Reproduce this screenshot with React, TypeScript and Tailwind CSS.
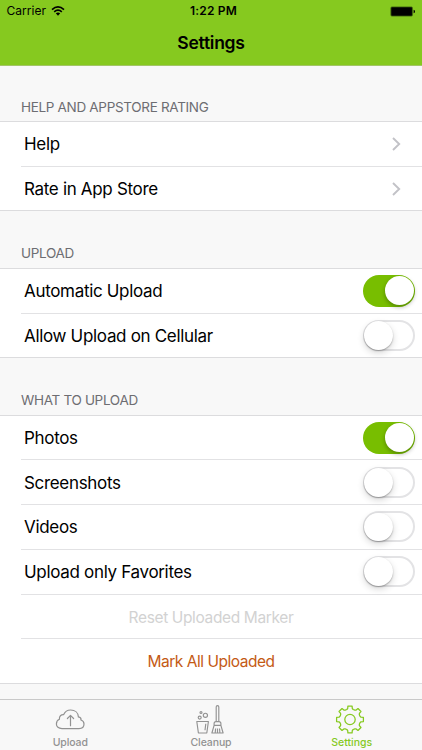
import React from "react";

function Toggle({ on = false }: { on?: boolean }) {
  return (
    <span
      role="switch"
      aria-checked={on}
      className={`flex shrink-0 items-center rounded-full ${
        on ? "h-8 w-[52px] justify-end bg-[#78be00] pr-[1.5px]" : "h-[31px] w-[52px] border-2 border-[#e3e3e5] bg-white"
      }`}
    >
      <span
        className={`size-[28.5px] shrink-0 rounded-full bg-white ${
          on
            ? "shadow-[0_2px_4px_rgba(0,0,0,0.3)]"
            : "-ml-px shadow-[0_3px_7px_rgba(0,0,0,0.16),0_1px_1.5px_rgba(0,0,0,0.28)]"
        }`}
      />
    </span>
  );
}

function Chevron() {
  return (
    <svg width="10" height="16" viewBox="0 0 10 16" className="mr-[14px]" fill="none" stroke="#c2c2c7" strokeWidth="1.9">
      <path d="M2 2 8.2 8 2 14" />
    </svg>
  );
}

function Row({ label, last = false, children }: { label: string; last?: boolean; children: React.ReactNode }) {
  return (
    <div className={last ? "" : "pl-[21px]"}>
      <div
        className={`flex h-[44.7px] items-center justify-between border-b pr-[6.8px] text-[17px] text-black ${
          last ? "border-[#dcdcde] pl-6" : "border-[#e2e2e4] pl-[3px]"
        }`}
      >
        <span className="pt-[2px] tracking-[-0.32px]">{label}</span>
        {children}
      </div>
    </div>
  );
}

function SectionTitle({ children }: { children: React.ReactNode }) {
  return (
    <h2 className="flex h-[57.5px] items-end border-b border-[#dcdcde] pb-[5.4px] pl-[21px] text-[13.5px] leading-[17px] font-normal tracking-[-0.32px] text-[#6d6d72]">
      {children}
    </h2>
  );
}

function gearPath() {
  const points: string[] = [];
  for (let i = 0; i < 8; i++) {
    const a = (i * Math.PI) / 4;
    for (const [x, y] of [[-3.2, -10], [-2.3, -11], [-2.1, -13.4], [2.1, -13.4], [2.3, -11], [3.2, -10]]) {
      const px = 15 + x * Math.cos(a) - y * Math.sin(a);
      const py = 15 + x * Math.sin(a) + y * Math.cos(a);
      points.push(`${px.toFixed(2)} ${py.toFixed(2)}`);
    }
  }
  return `M${points.join("L")}Z`;
}

function Gear() {
  return (
    <svg width="30" height="30" viewBox="0 0.5 30 30" className="mr-[3px]" fill="none" stroke="currentColor" strokeWidth="1.25" strokeLinejoin="round">
      <path d={gearPath()} />
      <circle cx="15" cy="15" r="5.2" />
    </svg>
  );
}

function Cloud() {
  return (
    <svg width="30" height="30" viewBox="0 0.6 30 30" fill="none" stroke="currentColor" strokeWidth="1.2" strokeLinecap="round" strokeLinejoin="round">
      <path d="M7 24.2C3.6 24.2 1.4 22.3 1.4 19.5C1.4 17.2 2.6 15.5 4.4 14.8C4.1 11.9 6 10 8.7 10.2C9.9 7.3 12.4 5.6 15.6 5.6C20.1 5.6 23.2 8.4 23.4 12.5C25.4 12.8 26.2 14.1 26 15.6C27.9 16.3 29 17.8 29 19.6C29 22.4 27 24.2 24 24.2Z" />
      <path d="M15.5 21.3V11M12.4 14.1 15.5 11l3.1 3.1" />
    </svg>
  );
}

function Cleaning() {
  return (
    <svg width="30" height="30" viewBox="1 0.7 30 30" fill="none" stroke="currentColor" strokeWidth="1.15" strokeLinejoin="round">
      <circle cx="6" cy="8.2" r="1" />
      <circle cx="10.4" cy="11" r="2.1" />
      <circle cx="4.7" cy="13.3" r="1.5" />
      <path d="M1.8 17.2h11.6l-1.6 11.5H3.4Z M10.8 19.5l-.8 6.4" />
      <path d="M21.2 17.3V2.6q0-1.3 1.3-1.3t1.3 1.3v14.7" />
      <path d="M19.1 21v-1.7q0-2 2-2h2.8q2 0 2 2V21M19.1 21h6.8l2.2 7.7H16.9Zm1.5 3.2-.4 4.5M22.5 24.2v4.5M24.5 24.2l.4 4.5" />
    </svg>
  );
}

function Tab({ label, active = false, children }: { label: string; active?: boolean; children: React.ReactNode }) {
  return (
    <div className={`flex w-[140.5px] flex-col items-center ${active ? "text-[#86c91f]" : "text-[#929292]"}`}>
      {children}
      <span className={`mt-[1px] text-[10.5px] leading-[13px] font-medium ${active ? "" : "tracking-[-0.1px]"}`}>{label}</span>
    </div>
  );
}

export default function App() {
  return (
    <div className="flex h-[750px] w-[422px] flex-col overflow-hidden bg-[#f8f8f8] font-['Inter','Liberation_Sans',sans-serif]">
      <header className="h-[66px] shrink-0 border-b border-[#a3c566] bg-[#86c91f] text-black">
        <div className="grid h-[22px] grid-cols-3 items-center px-[6px] text-[12px] leading-[22px]">
          <span className="flex items-center gap-[5px] pl-[0.5px]">
            <span className="text-[12px] tracking-[0.05px]">Carrier</span>
            <svg width="14" height="10" viewBox="0 0 14 10" fill="none" stroke="black" strokeWidth="1.7">
              <path d="M1 3.6Q7-1.7 13 3.6M3.2 5.8Q7 2.6 10.8 5.8" />
              <path d="M4.8 7.3Q7 5.5 9.2 7.3L7 9.7Z" fill="black" stroke="none" />
            </svg>
          </span>
          <span className="pl-[5px] text-center font-semibold tracking-[0.2px] whitespace-nowrap">1:22 PM</span>
          <svg width="26" height="11" viewBox="0 0 26 11" className="justify-self-end">
            <rect x="0.9" y="0.9" width="21.5" height="9.2" rx="1" stroke="#416811" strokeWidth="0.8" />
            <path d="M23.6 3.8q1.4 0 1.4 1.7t-1.4 1.7Z" />
          </svg>
        </div>
        <h1 className="text-center text-[17.5px] leading-[42px] font-semibold tracking-[-0.25px]">Settings</h1>
      </header>
      <main className="min-h-0 flex-1 overflow-hidden">
        <div className="-mt-[1.5px]">
          <SectionTitle>HELP AND APPSTORE RATING</SectionTitle>
          <div className="bg-white">
            <Row label="Help"><Chevron /></Row>
            <Row label="Rate in App Store" last><Chevron /></Row>
          </div>
          <SectionTitle>UPLOAD</SectionTitle>
          <div className="bg-white">
            <Row label="Automatic Upload"><Toggle on /></Row>
            <Row label="Allow Upload on Cellular" last><Toggle /></Row>
          </div>
          <SectionTitle>WHAT TO UPLOAD</SectionTitle>
          <div className="bg-white">
            <Row label="Photos"><Toggle on /></Row>
            <Row label="Screenshots"><Toggle /></Row>
            <Row label="Videos"><Toggle /></Row>
            <Row label="Upload only Favorites"><Toggle /></Row>
            <div className="pl-[21px]">
              <div className="flex h-[44.7px] items-center justify-center border-b border-[#e2e2e4] pt-[2px] pr-[21px] text-[15.5px] tracking-[-0.37px] text-[#d2d2d2]">
                Reset Uploaded Marker
              </div>
            </div>
            <div className="flex h-[44.7px] items-center justify-center border-b border-[#dcdcde] pt-[2px] text-[15.5px] tracking-[-0.48px] text-[#c45a14]">
              Mark All Uploaded
            </div>
          </div>
        </div>
      </main>
      <nav className="flex h-[51px] shrink-0 justify-between border-t border-[#c9c9c9] bg-[#f8f8f8] pt-[5px]">
        <Tab label="Upload"><Cloud /></Tab>
        <Tab label="Cleanup"><Cleaning /></Tab>
        <Tab label="Settings" active><Gear /></Tab>
      </nav>
    </div>
  );
}
